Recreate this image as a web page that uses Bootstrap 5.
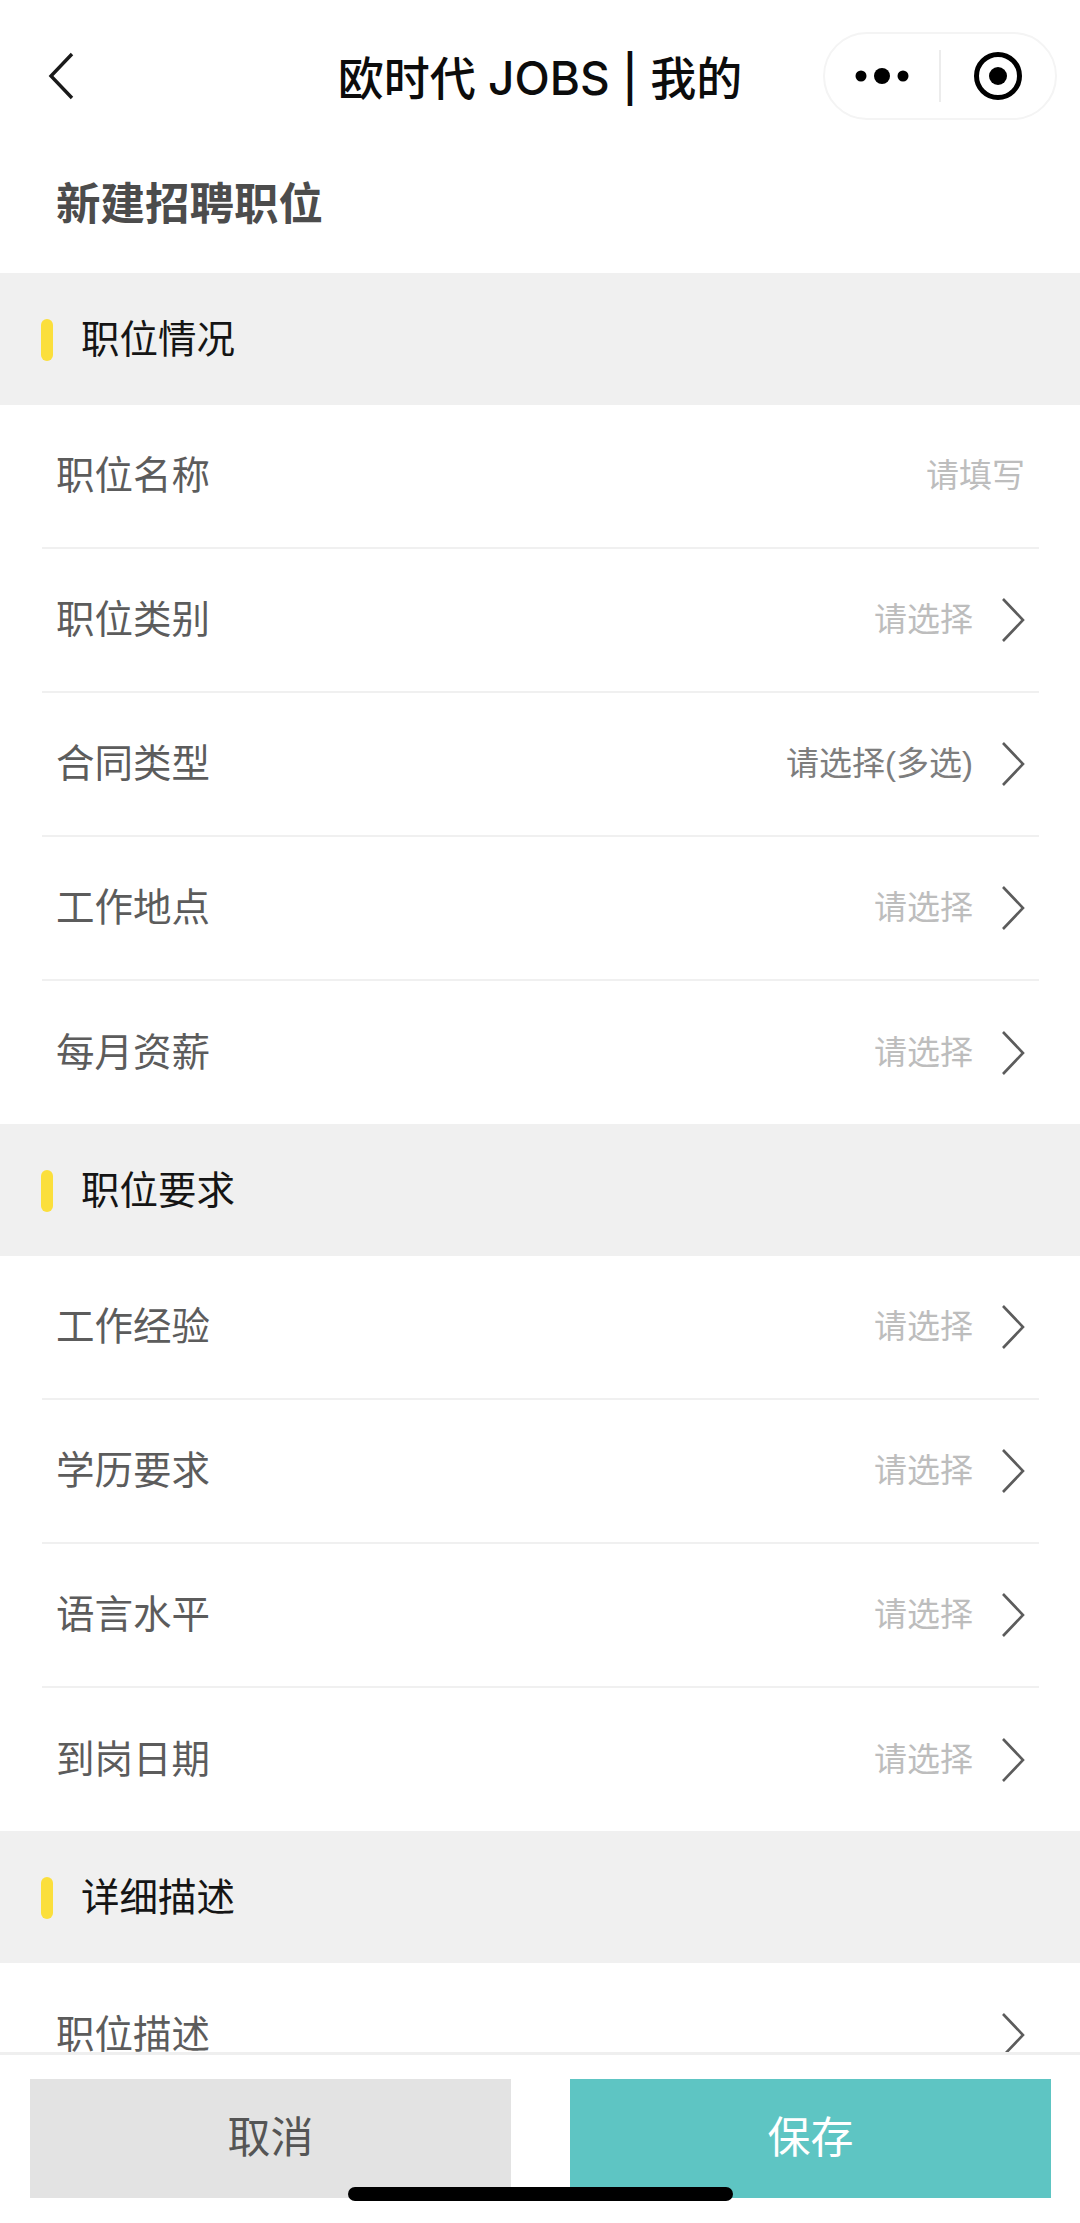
<!DOCTYPE html>
<html lang="zh-CN">
<head>
  <meta charset="UTF-8">
  <title>新建招聘职位</title>
  <link href="https://cdn.jsdelivr.net/npm/bootstrap@5.3.0/dist/css/bootstrap.min.css" rel="stylesheet">
  <style>
    html, body { height: 2223px; overflow: hidden; }
    body { font-family: "Liberation Sans", "Noto Sans CJK SC", sans-serif; background: #fff; }
    .page-wrap { height: 2223px; position: relative; }
    .top-nav { height: 154px; padding: 32px 23px 34px 23px; }
    .nav-side { flex: 1 1 0; }
    .nav-back { margin-left: 25px; }
    .nav-title { font-family: Inter, "Noto Sans CJK SC", sans-serif; font-size: 46px; font-weight: 500; color: #0c0c0c; line-height: 88px; padding-top: 4px; white-space: nowrap; }
    .capsule { width: 234px; height: 88px; border: 2px solid #f4f4f4; border-radius: 44px; }
    .capsule-split { width: 2px; height: 52px; background: #ececec; }
    .capsule-part { width: 116px; }
    .page-head { height: 119px; padding: 0 0 16px 56px; font-size: 44.5px; font-weight: 700; color: #4c4c4c; }
    .scroll-part { height: 1779px; overflow: hidden; }
    .sec-band { height: 132px; background: #f0f0f0; padding: 2px 0 0 41px; font-size: 38.5px; color: #151515; }
    .sec-mark { width: 12px; height: 42px; border-radius: 6px; background: #fbdf3c; margin-right: 28px; }
    .form-rows { margin: 0 41px 0 42px; }
    .form-rows .list-group-item { height: 144px; padding: 0 14px 0 14px; border: 0; border-bottom: 2px solid #f0f0f0; font-size: 38.5px; color: #5c5c5c; background: transparent; }
    .form-rows .list-group-item:last-child { height: 143px; border-bottom: 0; }
    .hint-text { font-size: 33px; color: #bdbdbd; }
    .hint-text.has-value { color: #7d7d7d; }
    .chev { width: 24px; height: 46px; margin-left: 28px; }
    .foot-bar { height: 171px; border-top: 3px solid #efefef; padding: 24px 29px 0 30px; background: #fff; gap: 59px; }
    .foot-btn { flex: 1 1 0; height: 119px; font-size: 43px; line-height: 1; border: 0; border-radius: 0; }
    .btn-cancel, .btn-cancel:hover { background: #e3e3e3; color: #555; }
    .btn-save, .btn-save:hover { background: #5ec5c3; color: #fff; }
    .home-bar { position: absolute; left: 348px; top: 2187px; width: 385px; height: 14px; border-radius: 7px; background: #000; }
  </style>
</head>
<body>
<div class="page-wrap">
  <div class="top-nav d-flex align-items-center">
    <div class="nav-side d-flex align-items-center">
      <svg class="nav-back" width="26" height="48" viewBox="0 0 26 48" fill="none" stroke="#1a1a1a" stroke-width="3.4">
        <path d="M24 2 3 24l21 22"/>
      </svg>
    </div>
    <div class="nav-title">欧时代 JOBS | 我的</div>
    <div class="nav-side d-flex justify-content-end">
      <div class="capsule d-flex align-items-center">
        <div class="capsule-part d-flex justify-content-center">
          <svg width="54" height="20" viewBox="0 0 54 20" fill="#000">
            <circle cx="6" cy="10" r="5.5"/><circle cx="27" cy="10" r="8"/><circle cx="48" cy="10" r="5.5"/>
          </svg>
        </div>
        <div class="capsule-split"></div>
        <div class="capsule-part d-flex justify-content-center">
          <svg width="50" height="50" viewBox="0 0 50 50">
            <circle cx="25" cy="25" r="21.5" fill="none" stroke="#000" stroke-width="5"/>
            <circle cx="25" cy="25" r="9" fill="#000"/>
          </svg>
        </div>
      </div>
    </div>
  </div>

  <div class="page-head d-flex align-items-center">新建招聘职位</div>

  <div class="scroll-part">
    <div class="sec-band d-flex align-items-center"><span class="sec-mark"></span>职位情况</div>
    <div class="list-group list-group-flush form-rows" id="rows1"></div>

    <div class="sec-band d-flex align-items-center"><span class="sec-mark"></span>职位要求</div>
    <div class="list-group list-group-flush form-rows" id="rows2"></div>

    <div class="sec-band d-flex align-items-center"><span class="sec-mark"></span>详细描述</div>
    <div class="list-group list-group-flush form-rows" id="rows3"></div>
  </div>

  <div class="foot-bar d-flex">
    <button class="btn foot-btn btn-cancel" type="button">取消</button>
    <button class="btn foot-btn btn-save" type="button">保存</button>
  </div>
  <div class="home-bar"></div>
</div>

<script>
  const chevron = '<svg class="chev" viewBox="0 0 24 46" fill="none" stroke="#5c5c5c" stroke-width="2.6"><path d="M2 2l20 21L2 44"/></svg>';

  function montarLinhas(id, linhas) {
    document.getElementById(id).innerHTML = linhas.map(l => `
      <div class="list-group-item d-flex align-items-center justify-content-between">
        <span>${l[0]}</span>
        <span class="d-flex align-items-center">
          <span class="hint-text ${l[3] ? 'has-value' : ''}">${l[1]}</span>${l[2] ? chevron : ''}
        </span>
      </div>`).join('');
  }

  montarLinhas('rows1', [
    ['职位名称', '请填写', false],
    ['职位类别', '请选择', true],
    ['合同类型', '请选择(多选)', true, true],
    ['工作地点', '请选择', true],
    ['每月资薪', '请选择', true]
  ]);
  montarLinhas('rows2', [
    ['工作经验', '请选择', true],
    ['学历要求', '请选择', true],
    ['语言水平', '请选择', true],
    ['到岗日期', '请选择', true]
  ]);
  montarLinhas('rows3', [
    ['职位描述', '', true]
  ]);
</script>
<script src="https://cdn.jsdelivr.net/npm/bootstrap@5.3.0/dist/js/bootstrap.bundle.min.js"></script>
</body>
</html>
